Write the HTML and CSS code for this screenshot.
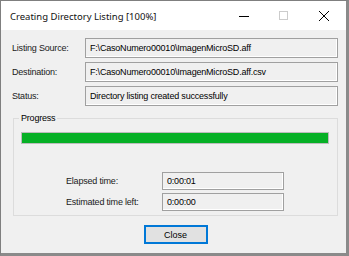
FILE: index.html
```html
<!DOCTYPE html>
<html>
<head>
<meta charset="utf-8">
<link rel="stylesheet" href="styles.css">
</head>
<body>
<div class="window">
  <div class="titlebar">
    <span class="title">Creating Directory Listing [100%]</span>
    <div class="controls">
      <svg class="ctl" width="40" height="29" viewBox="0 0 40 29"><line x1="15" y1="15.5" x2="25" y2="15.5" stroke="#000" stroke-width="1"/></svg>
      <svg class="ctl" width="40" height="29" viewBox="0 0 40 29"><rect x="15.5" y="10.5" width="8" height="8" fill="none" stroke="#cccccc" stroke-width="1"/></svg>
      <svg class="ctl" width="40" height="29" viewBox="0 0 40 29"><path d="M15 10 L25 20 M25 10 L15 20" stroke="#000" stroke-width="1"/></svg>
    </div>
  </div>
  <div class="content">
    <div class="fields">
      <div class="row"><span class="lbl">Listing Source:</span><div class="box">F:\CasoNumero00010\ImagenMicroSD.aff</div></div>
      <div class="row"><span class="lbl">Destination:</span><div class="box">F:\CasoNumero00010\ImagenMicroSD.aff.csv</div></div>
      <div class="row"><span class="lbl">Status:</span><div class="box">Directory listing created successfully</div></div>
    </div>
    <div class="group">
      <span class="legend">Progress</span>
      <div class="bar"><div class="fill" style="width:100%"></div></div>
      <div class="times">
        <div class="trow"><span class="tlbl">Elapsed time:</span><div class="tbox">0:00:01</div></div>
        <div class="trow"><span class="tlbl">Estimated time left:</span><div class="tbox">0:00:00</div></div>
      </div>
    </div>
    <div class="actions"><button class="btn">Close</button></div>
  </div>
</div>
</body>
</html>
```
FILE: styles.css
```css
html, body { margin: 0; padding: 0; }
body { width: 349px; height: 256px; background: #8a8a8a; overflow: hidden; }
.window {
  width: 345px; height: 252px;
  border: 1px solid #7f7f7f;
  border-right: 3px solid #8a8a8a;
  border-bottom: 3px solid #8a8a8a;
  background: #f0f0f0;
  display: flex; flex-direction: column;
  font-family: "Liberation Sans", Arial, sans-serif;
  font-size: 9px; letter-spacing: -0.2px; color: #000;
}
.titlebar {
  height: 29px; background: #fff; flex: none;
  display: flex; align-items: center; justify-content: space-between;
}
.title { font-family: "Noto Sans", sans-serif; font-size: 9.5px; letter-spacing: 0; padding-left: 9px; margin-top: 1px; color: #111; }
.controls { display: flex; padding-right: 2px; }
.ctl { display: block; }
.content { flex: 1; display: flex; flex-direction: column; padding: 8px 8px 0 11px; }
.fields { display: flex; flex-direction: column; gap: 4px; }
.row { display: flex; align-items: center; }
.lbl { width: 73px; flex: none; white-space: nowrap; color: #1a1a1a; }
.box, .tbox {
  flex: 1; height: 20px; box-sizing: border-box;
  border: 1px solid #a0a0a0;
  box-shadow: inset -1px -1px 0 #ffffff;
  padding: 0 4px; line-height: 18px;
  white-space: nowrap; overflow: hidden;
}
.group {
  position: relative;
  margin: 12px 0 0 1px; padding: 13px 8px 4px 7px;
  border: 1px solid #dcdcdc;
  height: 98px; box-sizing: border-box;
}
.legend {
  position: absolute; top: -6px; left: 5px;
  padding: 0 2px; background: #f0f0f0; line-height: 11px;
}
.bar { height: 12px; box-sizing: border-box; border: 1px solid #bcbcbc; background: #e6e6e6; }
.fill { height: 100%; background: #06b025; }
.times { display: flex; flex-direction: column; gap: 3px; margin: 28px 0 0 45px; }
.trow { display: flex; align-items: center; }
.tlbl { width: 96px; flex: none; white-space: nowrap; color: #1a1a1a; }
.tbox { flex: none; width: 122px; height: 18px; line-height: 16px; }
.actions { display: flex; justify-content: center; margin-top: 9px; padding-left: 1px; }
.btn {
  width: 64px; height: 19px; box-sizing: border-box;
  border: 1px solid #0078d7; background: #e1e1e1; color: #000;
  font-family: "Liberation Sans", Arial, sans-serif; font-size: 9px; padding: 0;
  box-shadow: inset 0 0 0 1px #0078d7;
}
```
